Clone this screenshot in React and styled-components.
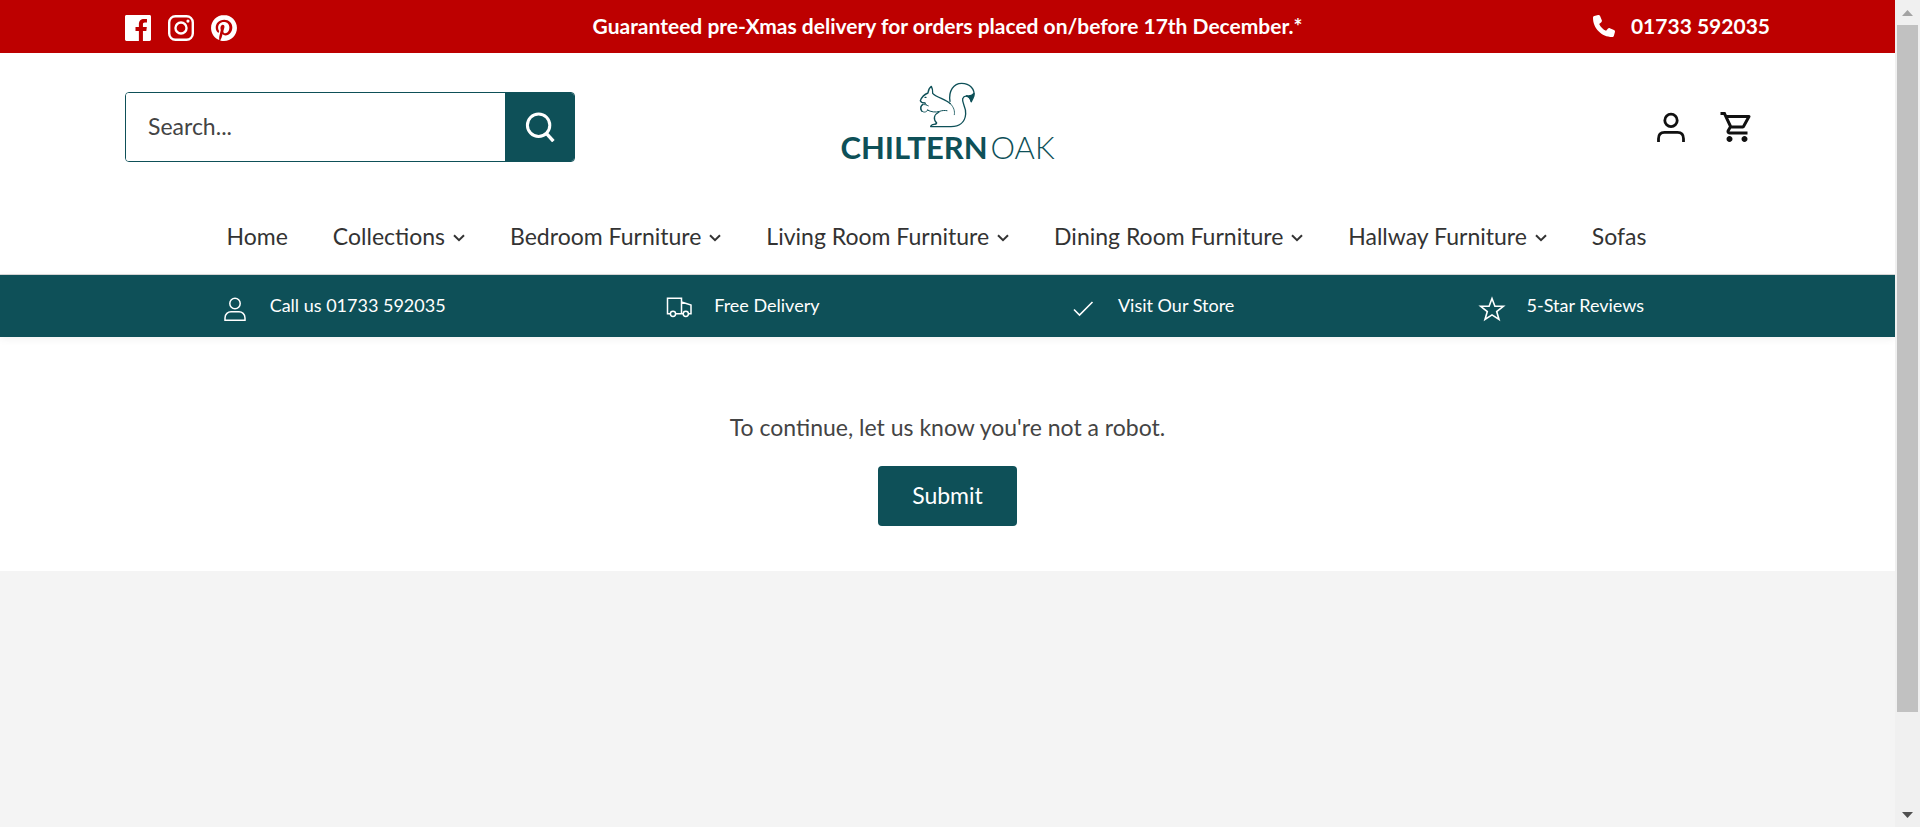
import React from "react";
import styled, { createGlobalStyle } from "styled-components";
import { FaPhone } from "react-icons/fa6";
import { MdOutlineShoppingCart } from "react-icons/md";

const teal = "#0e5058";

const GlobalStyle = createGlobalStyle`
  * { box-sizing: border-box; }
  body {
    margin: 0;
    background: #f4f4f4;
    color: #444;
    font-family: Lato, "Liberation Sans", sans-serif;
    font-size: 23px;
    line-height: 34px;
  }
  a { color: inherit; text-decoration: none; }
  svg { display: block; flex: none; }
`;

const Shell = styled.div`
  display: flex;
  min-height: 100vh;
`;

const Page = styled.div`
  flex: 1;
  min-width: 0;
`;

const Announcement = styled.div`
  display: grid;
  grid-template-columns: 1fr auto 1fr;
  align-items: center;
  height: 53px;
  padding: 0 125px 2px;
  background: #bd0000;
  color: #fff;
  font-size: 21px;
  font-weight: 700;
`;

const Socials = styled.div`
  display: flex;
  gap: 17px;
  padding-top: 4px;
`;

const PhoneLink = styled.a`
  display: flex;
  align-items: center;
  justify-self: end;
  gap: 16px;
`;

const Header = styled.header`
  background: #fff;
  border-bottom: 1px solid #d8d8d8;
`;

const Masthead = styled.div`
  display: grid;
  grid-template-columns: 1fr auto 1fr;
  align-items: center;
  height: 148px;
  padding: 0 125px;
`;

const SearchForm = styled.form`
  display: flex;
  width: 450px;
  height: 70px;
  border: 1px solid ${teal};
  border-radius: 4px;
  overflow: hidden;
`;

const SearchInput = styled.input`
  flex: 1;
  min-width: 0;
  padding: 0 22px 2px;
  border: 0;
  background: #fff;
  color: #444;
  font: inherit;
  &::placeholder { color: #444; opacity: 1; }
`;

const SearchButton = styled.button`
  display: grid;
  place-items: center;
  width: 69px;
  border: 0;
  background: ${teal};
  color: #fff;
`;

const LogoLink = styled.a`
  display: flex;
  flex-direction: column;
  align-items: center;
  gap: 2px;
  padding-bottom: 8px;
  color: ${teal};
`;

const Wordmark = styled.span`
  display: flex;
  gap: 3px;
  font-size: 31px;
  font-weight: 700;
`;

const LightWord = styled.span`
  font-weight: 300;
`;

const AccountLinks = styled.div`
  display: flex;
  justify-self: end;
  align-items: center;
  gap: 33px;
  padding-right: 15px;
  color: #111;
`;

const Nav = styled.nav`
  display: flex;
  justify-content: center;
  gap: 45px;
  height: 73px;
  padding: 18px 22px 0 0;
  color: #333;
  white-space: nowrap;
`;

const NavLink = styled.a`
  display: flex;
  gap: 8px;
  align-items: center;
  height: 34px;
  svg { margin-top: 4px; }
`;

const Benefits = styled.div`
  position: relative;
  display: grid;
  grid-template-columns: repeat(4, 1fr);
  height: 62px;
  padding: 0 130px 0 128px;
  background: ${teal};
  color: #fff;
  font-size: 18px;
  box-shadow: 0 2px 8px rgba(0, 0, 0, 0.06);
`;

const Benefit = styled.a`
  display: flex;
  justify-content: center;
  gap: 20px;
  padding-top: 13px;
  svg { margin-top: 6px; }
`;

const Challenge = styled.main`
  display: flex;
  flex-direction: column;
  align-items: center;
  gap: 22px;
  padding: 73px 0 45px;
  background: #fff;
  p { margin: 0; }
`;

const SubmitButton = styled.button`
  height: 60px;
  padding: 0 34px 2px;
  border: 0;
  border-radius: 4px;
  background: ${teal};
  color: #fff;
  font: inherit;
`;

const Scrollbar = styled.div`
  position: sticky;
  top: 0;
  display: flex;
  flex-direction: column;
  align-items: center;
  width: 25px;
  height: 100vh;
  background: #f0f0f0;
`;

const ScrollArrow = styled.div`
  display: grid;
  place-items: center;
  height: 25px;
  color: ${(p) => (p.$active ? "#505050" : "#a3a3a3")};
`;

const ScrollTrack = styled.div`
  flex: 1;
`;

const ScrollThumb = styled.div`
  width: 21px;
  height: 88.4%;
  background: #c1c1c1;
`;

const FacebookIcon = () => (
  <svg width="26" height="26" viewBox="0 0 24 24" fill="currentColor" aria-hidden="true">
    <path d="M22.676 0H1.324C.593 0 0 .593 0 1.324v21.352C0 23.408.593 24 1.324 24h11.494v-9.294H9.689v-3.621h3.129V8.41c0-3.099 1.894-4.785 4.659-4.785 1.325 0 2.464.097 2.796.141v3.24h-1.921c-1.5 0-1.792.721-1.792 1.771v2.311h3.584l-.465 3.63H16.56V24h6.115c.733 0 1.325-.592 1.325-1.324V1.324C24 .593 23.408 0 22.676 0" />
  </svg>
);

const InstagramIcon = () => (
  <svg width="26" height="26" viewBox="0 0 24 24" fill="none" stroke="currentColor" strokeWidth="2.2" aria-hidden="true">
    <rect x="1.1" y="1.1" width="21.8" height="21.8" rx="5.8" />
    <circle cx="12" cy="12" r="5.1" />
    <circle cx="18.4" cy="5.6" r="1.45" fill="currentColor" stroke="none" />
  </svg>
);

const PinterestIcon = () => (
  <svg width="26" height="26" viewBox="0 0 24 24" fill="currentColor" aria-hidden="true">
    <path d="M12.017 0C5.396 0 .029 5.367.029 11.987c0 5.079 3.158 9.417 7.618 11.162-.105-.949-.199-2.403.041-3.439.219-.937 1.406-5.957 1.406-5.957s-.359-.72-.359-1.781c0-1.663.967-2.911 2.168-2.911 1.024 0 1.518.769 1.518 1.688 0 1.029-.653 2.567-.992 3.992-.285 1.193.6 2.165 1.775 2.165 2.128 0 3.768-2.245 3.768-5.487 0-2.861-2.063-4.869-5.008-4.869-3.41 0-5.409 2.562-5.409 5.199 0 1.033.394 2.143.889 2.741.099.12.112.225.085.345-.09.375-.293 1.199-.334 1.363-.053.225-.172.271-.401.165-1.495-.69-2.433-2.878-2.433-4.646 0-3.776 2.748-7.252 7.92-7.252 4.158 0 7.392 2.967 7.392 6.923 0 4.135-2.607 7.462-6.233 7.462-1.214 0-2.354-.629-2.758-1.379l-.749 2.848c-.269 1.045-1.004 2.352-1.498 3.146 1.123.345 2.306.535 3.55.535 6.607 0 11.985-5.365 11.985-11.987C23.97 5.39 18.592.026 11.985.026L12.017 0z" />
  </svg>
);

const SearchIcon = () => (
  <svg width="30" height="30" viewBox="0 0 30 30" fill="none" stroke="currentColor" strokeWidth="3" aria-hidden="true">
    <circle cx="13.6" cy="13.2" r="11.2" />
    <path d="M21.100 21.2l7.300 8" strokeWidth="3.4" />
  </svg>
);

const AccountIcon = () => (
  <svg width="30" height="32" viewBox="0 0 30 32" fill="none" stroke="currentColor" strokeWidth="2.8" aria-hidden="true">
    <circle cx="15" cy="9.4" r="6.2" />
    <path d="M2.5 31v-3.200c0-4.200 2.300-6.500 6-6.500h13c3.700 0 6 2.300 6 6.500V31" />
  </svg>
);

const Chevron = () => (
  <svg width="12" height="8" viewBox="0 0 12 8" fill="none" stroke="currentColor" strokeWidth="2" aria-hidden="true">
    <path d="M1 1.200l5 5 5-5" />
  </svg>
);

const PersonIcon = () => (
  <svg width="30" height="30" viewBox="0 0 30 30" fill="none" stroke="currentColor" strokeWidth="1.500" aria-hidden="true">
    <circle cx="15" cy="9.500" r="5.200" />
    <path d="M5 26.300v-2.300c0-4 3-6.200 6-6.200h8c3 0 6 2.200 6 6.200v2.300z" />
  </svg>
);

const TruckIcon = () => (
  <svg width="30" height="30" viewBox="0 0 30 30" fill="none" stroke="currentColor" strokeWidth="1.500" aria-hidden="true">
    <path d="M6 19.800H3.500V4.300h14v15.500h-5.800M17.500 8l9.500 3v8.800h-2.500M17.500 19.800h1.500" />
    <circle cx="9" cy="19.800" r="2.600" />
    <circle cx="21.800" cy="19.800" r="2.600" />
  </svg>
);

const CheckIcon = () => (
  <svg width="30" height="30" viewBox="0 0 30 30" fill="none" stroke="currentColor" strokeWidth="1.600" aria-hidden="true">
    <path d="M6 15.500l5.500 5.500L24.500 8" />
  </svg>
);

const StarIcon = () => (
  <svg width="30" height="30" viewBox="0 0 30 30" fill="none" stroke="currentColor" strokeWidth="1.600" aria-hidden="true">
    <path d="M15 4.500l2.900 7.800h8.400l-6.600 5.200 2.300 8-7-4.600-7 4.600 2.300-8-6.600-5.200h8.400z" />
  </svg>
);

const Squirrel = () => (
  <svg
    width="57"
    height="46"
    viewBox="300 36 171 138"
    fill="none"
    stroke="currentColor"
    strokeWidth="4"
    strokeLinecap="round"
    strokeLinejoin="round"
    aria-hidden="true"
  >
    <path d="M318 99Q307 99 304 92C308 82 316 73 327 69Q328 56 337 49Q342 58 341 70C352 82 380 88 394 101" />
    <path d="M394 101C405 112 408 124 406 134" strokeWidth="2.500" />
    <path d="M318 82h3" />
    <path d="M322 105C310 100 303 108 305 117C308 128 322 130 326 120" strokeWidth="2.500" />
    <path d="M311 103C304 108 304 118 309 124" />
    <path d="M318 99Q322 108 328 108" strokeWidth="2.500" />
    <path d="M325 120C336 126 350 128 362 124C370 121 378 121 384 122" strokeWidth="3" />
    <path d="M360 126C344 134 342 148 353 159Q352 163 345 163Q336 164 335 170H396C420 170 438 158 440 132C442 110 428 100 431 86C436 74 452 76 457 95" />
    <path d="M393 94C388 62 404 40 428 40C452 40 470 58 464 80" />
    <path d="M465 70Q464 86 457 95Q453 80 443 77Q456 80 465 70z" fill="currentColor" />
  </svg>
);

const navItems = [
  ["Home", false],
  ["Collections", true],
  ["Bedroom Furniture", true],
  ["Living Room Furniture", true],
  ["Dining Room Furniture", true],
  ["Hallway Furniture", true],
  ["Sofas", false],
];

const benefits = [
  ["Call us 01733 592035", PersonIcon],
  ["Free Delivery", TruckIcon],
  ["Visit Our Store", CheckIcon],
  ["5-Star Reviews", StarIcon],
];

export default function App() {
  return (
    <Shell>
      <GlobalStyle />
      <Page>
        <Announcement>
          <Socials>
            <a href="#facebook" aria-label="Facebook"><FacebookIcon /></a>
            <a href="#instagram" aria-label="Instagram"><InstagramIcon /></a>
            <a href="#pinterest" aria-label="Pinterest"><PinterestIcon /></a>
          </Socials>
          <span>Guaranteed pre-Xmas delivery for orders placed on/before 17th December.*</span>
          <PhoneLink href="tel:01733592035">
            <FaPhone size={22} aria-hidden="true" />
            01733 592035
          </PhoneLink>
        </Announcement>
        <Header>
          <Masthead>
            <SearchForm role="search">
              <SearchInput type="text" placeholder="Search..." aria-label="Search" />
              <SearchButton type="button" aria-label="Search"><SearchIcon /></SearchButton>
            </SearchForm>
            <LogoLink href="#home">
              <Squirrel />
              <Wordmark>
                CHILTERN<LightWord>OAK</LightWord>
              </Wordmark>
            </LogoLink>
            <AccountLinks>
              <a href="#account" aria-label="Account"><AccountIcon /></a>
              <a href="#cart" aria-label="Cart"><MdOutlineShoppingCart size={36} /></a>
            </AccountLinks>
          </Masthead>
          <Nav>
            {navItems.map(([label, menu]) => (
              <NavLink href="#menu" key={label}>
                {label}
                {menu && <Chevron />}
              </NavLink>
            ))}
          </Nav>
        </Header>
        <Benefits>
          {benefits.map(([label, Icon]) => (
            <Benefit href="#benefit" key={label}>
              <Icon />
              {label}
            </Benefit>
          ))}
        </Benefits>
        <Challenge>
          <p>To continue, let us know you're not a robot.</p>
          <SubmitButton type="button">Submit</SubmitButton>
        </Challenge>
      </Page>
      <Scrollbar aria-hidden="true">
        <ScrollArrow>
          <svg width="11" height="6" viewBox="0 0 11 6" fill="currentColor"><path d="M0 6l5.500-6L11 6z" /></svg>
        </ScrollArrow>
        <ScrollTrack><ScrollThumb /></ScrollTrack>
        <ScrollArrow $active>
          <svg width="11" height="6" viewBox="0 0 11 6" fill="currentColor"><path d="M0 0l5.500 6L11 0z" /></svg>
        </ScrollArrow>
      </Scrollbar>
    </Shell>
  );
}
